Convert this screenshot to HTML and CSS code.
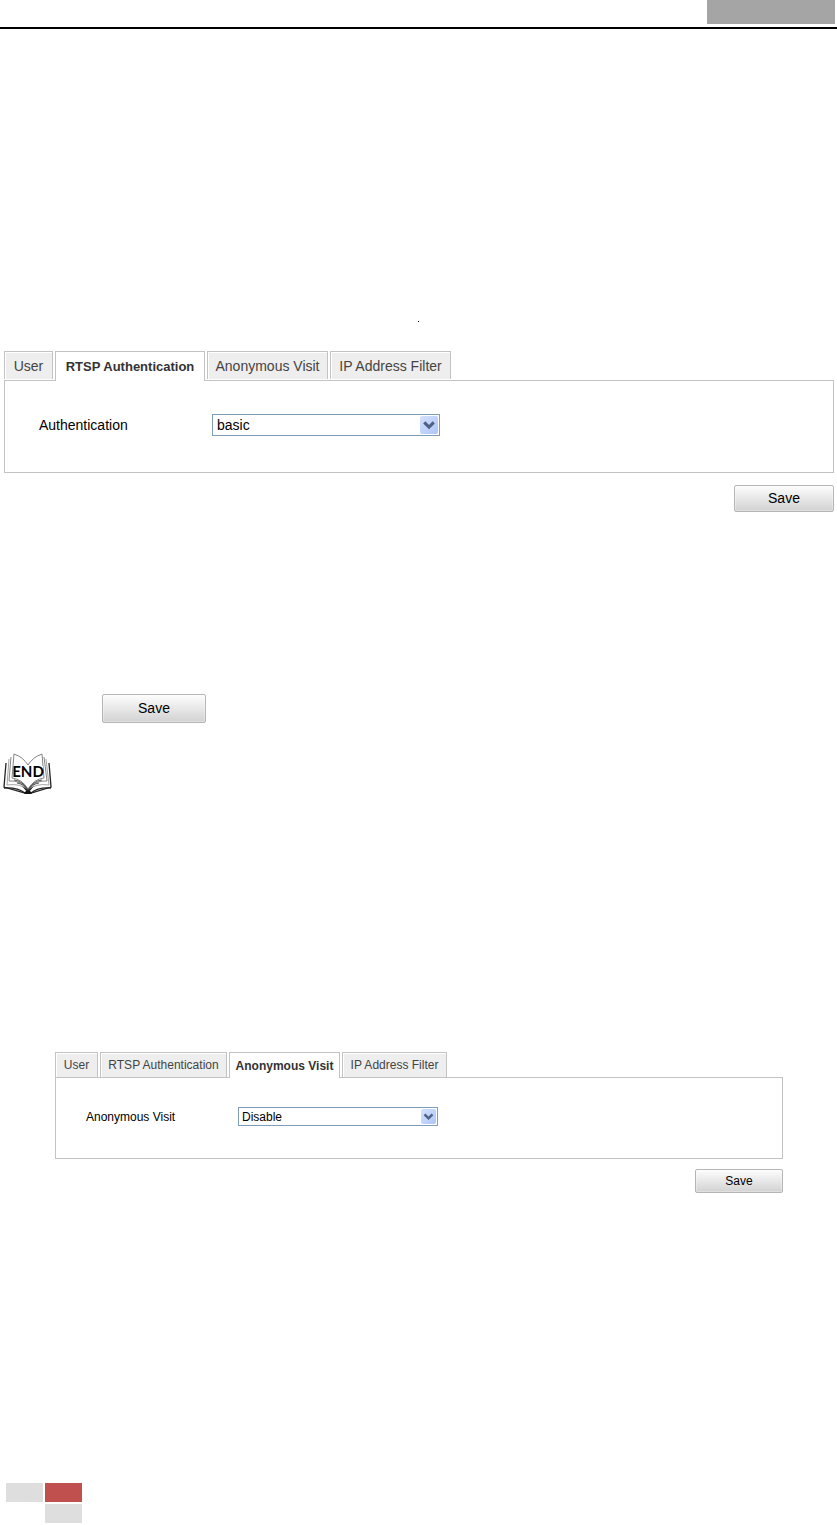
FILE: index.html
```html
<!DOCTYPE html>
<html lang="en">
<head>
    <meta charset="UTF-8">
    <meta name="viewport" content="width=device-width, initial-scale=1.0">
    <title>RTSP Authentication and Anonymous Visit</title>
    <link rel="stylesheet" href="styles.css">
</head>
<body>

    <header class="page-header">
        <div class="header-block"></div>
    </header>

    <main>
        <div class="mark"></div>

        <!-- RTSP Authentication -->
        <section class="settings settings-large">
            <nav class="tabs">
                <button type="button" class="tab">User</button>
                <button type="button" class="tab active">RTSP Authentication</button>
                <button type="button" class="tab">Anonymous Visit</button>
                <button type="button" class="tab">IP Address Filter</button>
            </nav>
            <div class="panel">
                <label for="authentication">Authentication</label>
                <div class="select-box">
                    <select id="authentication">
                        <option>basic</option>
                    </select>
                    <svg class="arrow" viewBox="0 0 17 17">
                        <path d="M4 6 L8.5 10.5 L13 6" fill="none" stroke="#4d6185" stroke-width="2.8"/>
                    </svg>
                </div>
            </div>
            <button type="button" class="save-button">Save</button>
        </section>

        <button type="button" class="save-button save-step">Save</button>

        <!-- End of section book -->
        <svg class="end-icon" viewBox="0 0 50 42" role="img" aria-label="END">
            <path d="M3 10 L1 34 L22 40 H28 L48 34 L46 10" fill="#fff" stroke="#222" stroke-width="1.3"/>
            <path d="M1 35 Q14 34 22 40 L28 40 Q35 34 48 35" fill="none" stroke="#222" stroke-width="1.4"/>
            <path d="M6 6 L4 32 Q17 30 25 37 Q33 30 46 32 L43 6" fill="#fff" stroke="#999" stroke-width="0.9"/>
            <path d="M8 4 L6 28 Q17 27 25 36 Q33 27 44 28 L41 4" fill="#fff" stroke="#777" stroke-width="0.9"/>
            <path d="M11 1 L9 25 Q19 26 25 36 Q31 26 41 25 L39 1 Q30 4 25 12 Q20 4 11 1 Z" fill="#fff" stroke="#777" stroke-width="0.9"/>
            <path d="M11 27 Q20 28 25 37 Q30 28 39 27" fill="none" stroke="#444" stroke-width="0.9"/>
            <path d="M14 30 Q21 31 25 38 Q29 31 36 30" fill="none" stroke="#444" stroke-width="0.9"/>
            <path d="M19 33 L25 37 L31 33 L26 39 H24 Z" fill="#222"/>
            <path d="M21 40 L23 38 H27 L29 40 L27 41 H23 Z" fill="#111"/>
            <rect x="10" y="13" width="30" height="11" fill="#fff"/>
            <text x="25" y="24" class="end-text">END</text>
        </svg>

        <!-- Anonymous Visit -->
        <section class="settings settings-small">
            <nav class="tabs">
                <button type="button" class="tab">User</button>
                <button type="button" class="tab">RTSP Authentication</button>
                <button type="button" class="tab active">Anonymous Visit</button>
                <button type="button" class="tab">IP Address Filter</button>
            </nav>
            <div class="panel">
                <label for="anonymousVisit">Anonymous Visit</label>
                <div class="select-box">
                    <select id="anonymousVisit">
                        <option>Disable</option>
                    </select>
                    <svg class="arrow" viewBox="0 0 17 17">
                        <path d="M4 6 L8.5 10.5 L13 6" fill="none" stroke="#4d6185" stroke-width="2.8"/>
                    </svg>
                </div>
            </div>
            <button type="button" class="save-button">Save</button>
        </section>
    </main>

    <footer class="page-footer">
        <div class="square"></div>
        <div class="square red"></div>
        <div class="square last"></div>
    </footer>

</body>
</html>
```
FILE: styles.css
```css
* {
    box-sizing: border-box;
}

body {
    margin: 0;
    min-height: 100vh;
    display: flex;
    flex-direction: column;
    background-color: #fff;
    font-family: "Liberation Sans", Arial, sans-serif;
    color: #000;
}

button, select {
    font: inherit;
}

.page-header {
    height: 29px;
    padding-right: 2px;
    border-bottom: 2px solid #000;
}

.header-block {
    width: 128px;
    height: 24px;
    margin-left: auto;
    background-color: #a5a5a5;
}

main {
    display: flex;
    flex-direction: column;
    flex: 1;
}

.mark {
    width: 1px;
    height: 1px;
    margin: 292px auto 0;
    background-color: #000;
}

/* Settings block with tabs */
.settings {
    display: flex;
    flex-direction: column;
}

.settings-large {
    margin: 29px 3px 0 4px;
    font-size: 14px;
}

.settings-small {
    margin: 257px 54px 0 55px;
    font-size: 12px;
}

.tabs {
    display: grid;
    grid-template-columns: 49px 150px 121px 121px;
    gap: 2px;
}

.tab {
    height: 28px;
    padding: 0;
    border: 1px solid #c3c3c3;
    border-bottom: none;
    background-color: #eee;
    box-shadow: inset 1px 1px 0 #fff;
    color: #444;
    white-space: nowrap;
    cursor: pointer;
}

.tab.active {
    height: 30px;
    margin-bottom: -1px;
    background-color: #fff;
    color: #333;
    font-weight: bold;
    z-index: 1;
}

.settings-large .tab.active {
    font-size: 13px;
}

.panel {
    display: flex;
    align-items: center;
    height: 93px;
    padding: 0 0 3px 34px;
    border: 1px solid #c3c3c3;
}

.panel label {
    width: 173px;
}

.select-box {
    position: relative;
    width: 228px;
    height: 22px;
}

.select-box select {
    width: 100%;
    height: 100%;
    padding: 0 20px 0 4px;
    border: 1px solid #7f9db9;
    border-radius: 0;
    background-color: #fff;
    color: #000;
    appearance: none;
}

.arrow {
    position: absolute;
    top: 2px;
    right: 2px;
    width: 18px;
    height: 18px;
    border-radius: 2px;
    background: linear-gradient(135deg, #d5e1fc, #adc5f7);
    pointer-events: none;
}

.save-button {
    align-self: flex-end;
    width: 100px;
    height: 27px;
    margin-top: 12px;
    padding: 0 0 1px;
    border: 1px solid #b5b5b5;
    border-radius: 2px;
    background: linear-gradient(#fdfdfd, #d2d2d2);
    box-shadow: inset 0 0 0 1px rgba(255, 255, 255, 0.3);
    color: #000;
    cursor: pointer;
}

.settings-small .tabs {
    grid-template-columns: 43px 127px 111px 105px;
}

.settings-small .tab {
    height: 25px;
}

.settings-small .tab.active {
    height: 26px;
}

.settings-small .panel {
    height: 82px;
    padding-left: 30px;
}

.settings-small label {
    width: 152px;
}

.settings-small .select-box {
    width: 200px;
    height: 19px;
}

.settings-small select {
    padding-left: 3px;
}

.settings-small .arrow {
    width: 15px;
    height: 15px;
}

.settings-small .save-button {
    width: 88px;
    height: 24px;
    margin-top: 10px;
    padding: 0;
}

.save-step {
    align-self: flex-start;
    width: 104px;
    height: 29px;
    margin: 182px 0 0 102px;
    font-size: 14px;
}

.end-icon {
    width: 50px;
    height: 42px;
    margin: 30px 0 0 3px;
}

.end-text {
    font-family: Lato, sans-serif;
    font-size: 15px;
    font-weight: bold;
    text-anchor: middle;
    fill: #000;
}

/* Squares at the bottom of the page */
.page-footer {
    display: grid;
    grid-template-columns: 37px 37px;
    grid-auto-rows: 19px;
    gap: 2px;
    padding: 0 0 2px 6px;
}

.square {
    background-color: #dedede;
}

.square.red {
    background-color: #c0504d;
}

.square.last {
    grid-column: 2;
}
```
